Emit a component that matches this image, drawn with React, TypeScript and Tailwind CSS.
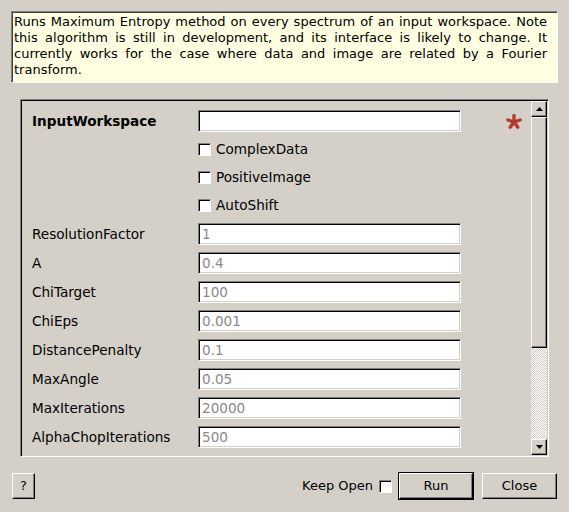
import React from "react";

const font = { fontFamily: '"DejaVu Sans", "Liberation Sans", sans-serif' };

function Field({ label, value, bold, star }: { label: string; value: string; bold?: boolean; star?: boolean }) {
  return (
    <div className="flex items-center h-[22px]">
      <div className={"w-[166px] text-[13.6px] text-black " + (bold ? "font-bold" : "")}>{label}</div>
      <div className="w-[263px] h-[22px] bg-white border border-t-[#808080] border-l-[#808080] border-r-white border-b-white shadow-[inset_1px_1px_0_#000,inset_-1px_-1px_0_#d4d0c8] flex items-center pl-[3px] text-[13.6px] text-[#8a8a8a]">
        {value}
      </div>
      {star && (
        <svg className="ml-[45px] mt-[2px]" width="16" height="16" viewBox="0 0 16 16">
          <g stroke="#b23a2c" strokeWidth="3.4" strokeLinecap="round">
            <line x1="8" y1="8" x2="8" y2="1.6" />
            <line x1="8" y1="8" x2="14.1" y2="6" />
            <line x1="8" y1="8" x2="11.8" y2="13.2" />
            <line x1="8" y1="8" x2="4.2" y2="13.2" />
            <line x1="8" y1="8" x2="1.9" y2="6" />
          </g>
        </svg>
      )}
    </div>
  );
}

function Check({ label }: { label: string }) {
  return (
    <div className="flex items-center h-[21px] pl-[166px]">
      <div className="w-[13px] h-[13px] bg-white border border-t-[#808080] border-l-[#808080] border-r-white border-b-white shadow-[inset_1px_1px_0_#000]" />
      <span className="ml-[5px] text-[13.6px] text-black">{label}</span>
    </div>
  );
}

export default function App() {
  return (
    <div className="w-[569px] h-[512px] bg-[#d4d0c8] overflow-hidden flex flex-col" style={font}>
      <div className="mt-[11px] ml-[11px] w-[547px] h-[72px] bg-[#ffffe1] border border-t-[#808080] border-l-[#808080] border-r-white border-b-white shadow-[inset_1px_1px_0_#404040] pl-[2px] pr-[10px] pt-[2px] text-[13px] leading-[16px] text-black text-justify">
        Runs Maximum Entropy method on every spectrum of an input workspace. Note this algorithm is still in development, and its interface is likely to change. It currently works for the case where data and image are related by a Fourier transform.
      </div>

      <div className="mt-[16px] ml-[20px] w-[529px] h-[358px] flex border border-t-[#808080] border-l-[#808080] border-r-white border-b-white shadow-[inset_1px_1px_0_#000,inset_-1px_-1px_0_#d4d0c8] p-[1px]">
        <div className="flex-1 pl-[10px] pt-[9px] flex flex-col gap-[7px] overflow-hidden">
          <Field label="InputWorkspace" value="" bold star />
          <Check label="ComplexData" />
          <Check label="PositiveImage" />
          <Check label="AutoShift" />
          <Field label="ResolutionFactor" value="1" />
          <Field label="A" value="0.4" />
          <Field label="ChiTarget" value="100" />
          <Field label="ChiEps" value="0.001" />
          <Field label="DistancePenalty" value="0.1" />
          <Field label="MaxAngle" value="0.05" />
          <Field label="MaxIterations" value="20000" />
          <Field label="AlphaChopIterations" value="500" />
        </div>
        <div className="w-[16px] flex flex-col">
          <div className="h-[16px] bg-[#d4d0c8] border border-t-white border-l-white border-r-black border-b-black shadow-[inset_-1px_-1px_0_#808080] flex items-center justify-center">
            <svg width="7" height="4" viewBox="0 0 7 4"><polygon points="3.5,0 7,4 0,4" fill="#000" /></svg>
          </div>
          <div className="h-[231px] bg-[#d4d0c8] border border-t-white border-l-white border-r-black border-b-black shadow-[inset_-1px_-1px_0_#808080]" />
          <div className="flex-1 bg-[repeating-conic-gradient(#d4d0c8_0_25%,#ffffff_0_50%)] bg-[length:2px_2px]" />
          <div className="h-[16px] bg-[#d4d0c8] border border-t-white border-l-white border-r-black border-b-black shadow-[inset_-1px_-1px_0_#808080] flex items-center justify-center">
            <svg width="7" height="4" viewBox="0 0 7 4"><polygon points="0,0 7,0 3.5,4" fill="#000" /></svg>
          </div>
        </div>
      </div>

      <div className="mt-[15px] flex items-center px-[12px] text-[13px] text-black">
        <div className="w-[23px] h-[26px] border border-t-white border-l-white border-r-black border-b-black shadow-[inset_-1px_-1px_0_#808080] flex items-center justify-center">?</div>
        <div className="flex-1" />
        <span>Keep Open</span>
        <div className="ml-[6px] w-[13px] h-[13px] bg-white border border-t-[#808080] border-l-[#808080] border-r-white border-b-white shadow-[inset_1px_1px_0_#000]" />
        <div className="ml-[6px] w-[76px] h-[28px] border border-black">
          <div className="w-full h-full border border-t-white border-l-white border-r-black border-b-black shadow-[inset_-1px_-1px_0_#808080] flex items-center justify-center">Run</div>
        </div>
        <div className="ml-[8px] w-[75px] h-[26px] border border-t-white border-l-white border-r-black border-b-black shadow-[inset_-1px_-1px_0_#808080] flex items-center justify-center">Close</div>
      </div>
    </div>
  );
}
